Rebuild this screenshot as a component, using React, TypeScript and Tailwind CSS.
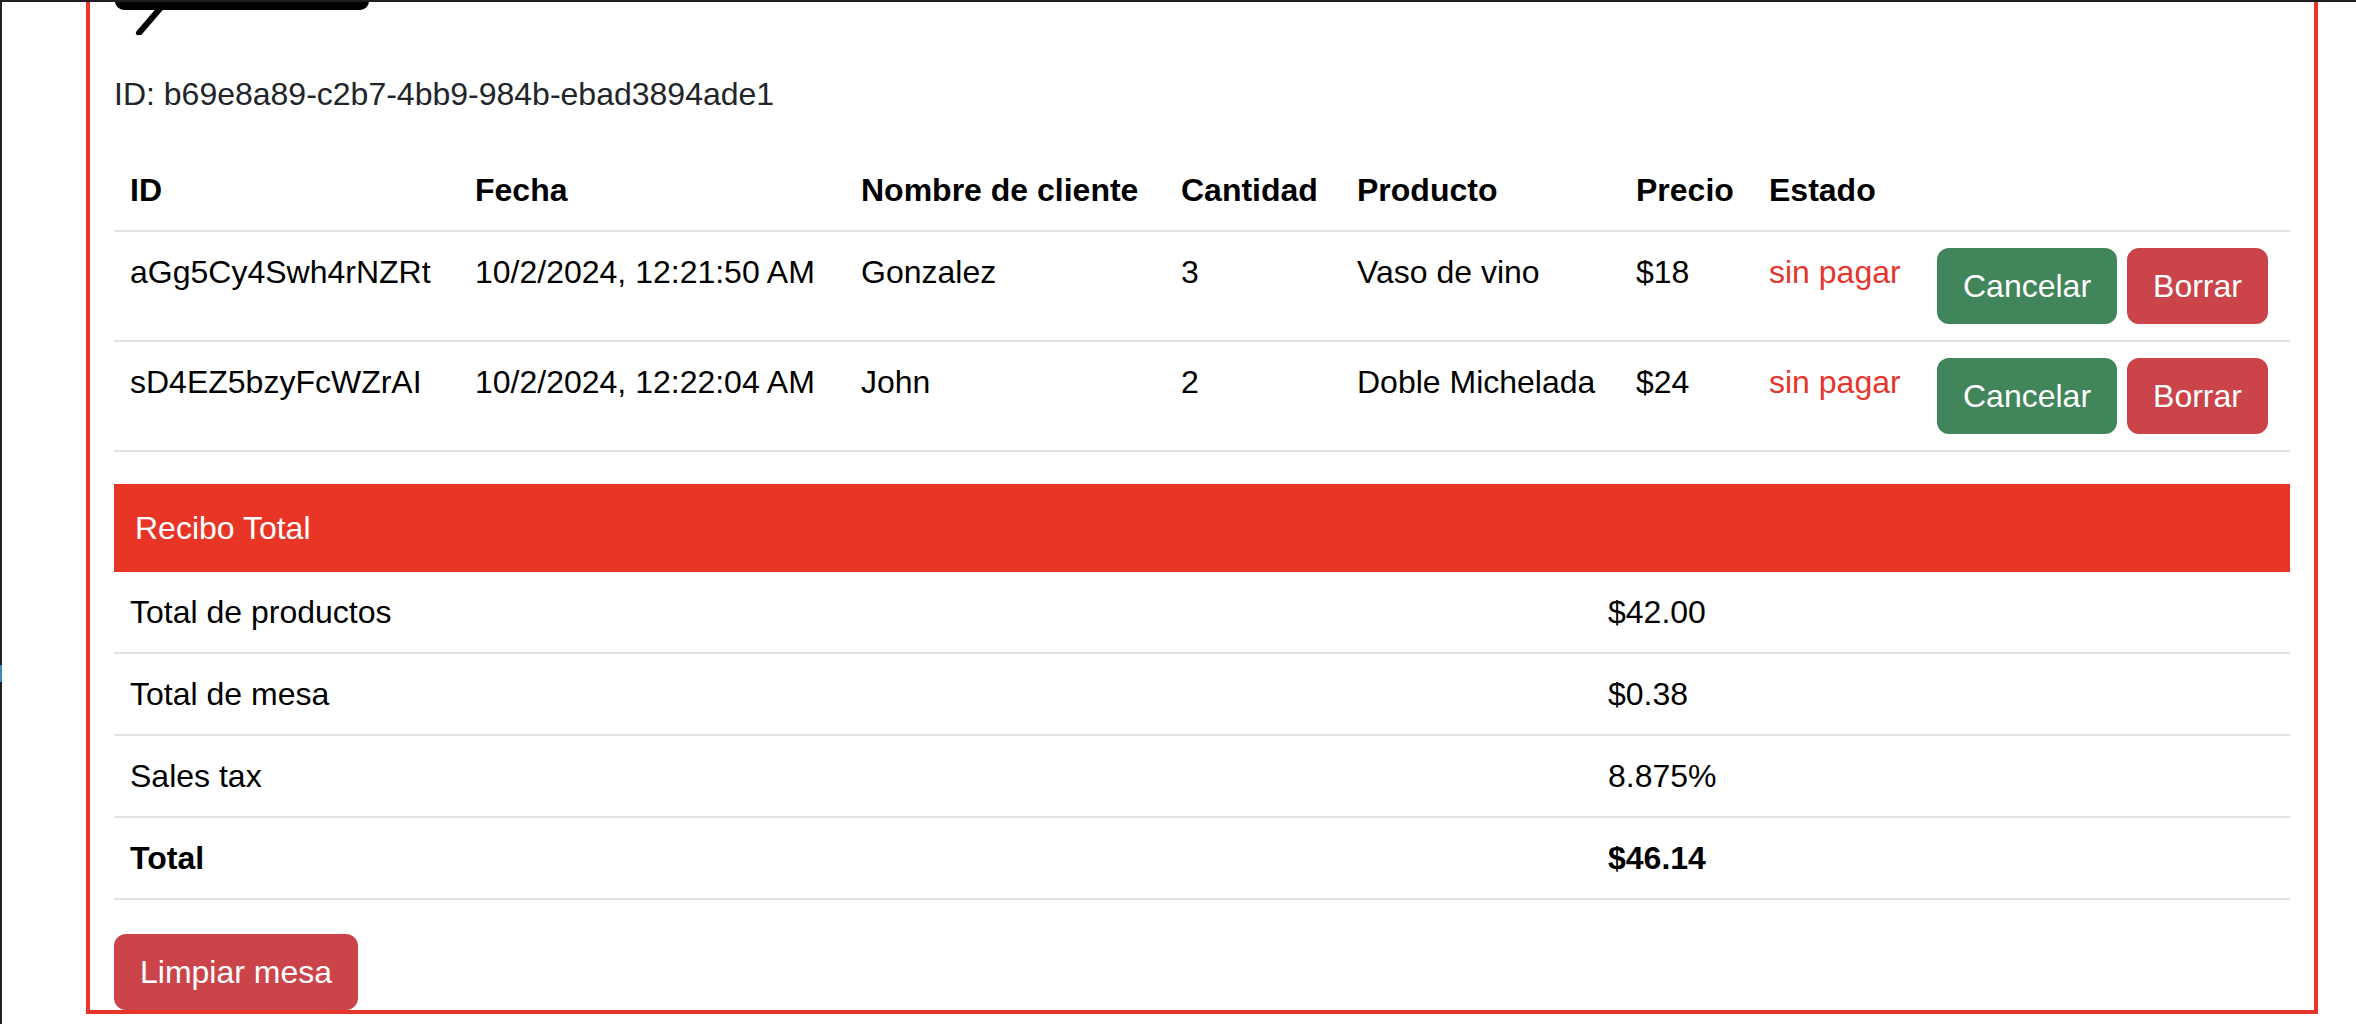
const orders = [
  {
    id: "aGg5Cy4Swh4rNZRt",
    fecha: "10/2/2024, 12:21:50 AM",
    cliente: "Gonzalez",
    cantidad: 3,
    producto: "Vaso de vino",
    precio: "$18",
    estado: "sin pagar",
  },
  {
    id: "sD4EZ5bzyFcWZrAI",
    fecha: "10/2/2024, 12:22:04 AM",
    cliente: "John",
    cantidad: 2,
    producto: "Doble Michelada",
    precio: "$24",
    estado: "sin pagar",
  },
]

const totals = [
  { label: "Total de productos", value: "$42.00" },
  { label: "Total de mesa", value: "$0.38" },
  { label: "Sales tax", value: "8.875%" },
  { label: "Total", value: "$46.14", bold: true },
]

const cell = "px-4 py-4 border-b-2 border-[#dee2e6] text-left align-top"

export default function App() {
  return (
    <div className="relative min-h-screen bg-white border-l-2 border-t-2 border-[#1e1f22] font-['Liberation_Sans',Arial,sans-serif] text-[32px] leading-[48px] text-black">
      {/* stray mark on the window edge */}
      <div className="absolute left-[-2px] top-[663px] w-[2px] h-[17px] bg-[#3b8fb5]" />

      <div className="ml-[84px] w-[2232px] border-4 border-t-0 border-[#e8352b] px-6">
        {/* bottom of the cropped logo */}
        <svg width="260" height="33" viewBox="0 0 260 33" className="block">
          <rect x="1" y="-12" width="254" height="20" rx="9" fill="#000" />
          <line x1="49" y1="3" x2="25" y2="31" stroke="#000" strokeWidth="6" strokeLinecap="round" />
        </svg>

        <p className="mt-[35px] mb-8 text-[#212529]">ID: b69e8a89-c2b7-4bb9-984b-ebad3894ade1</p>

        {/* Orders */}
        <table className="w-full table-fixed mb-8">
          <colgroup>
            <col className="w-[345px]" />
            <col className="w-[386px]" />
            <col className="w-[320px]" />
            <col className="w-[176px]" />
            <col className="w-[279px]" />
            <col className="w-[133px]" />
            <col className="w-[168px]" />
            <col className="w-[369px]" />
          </colgroup>
          <thead>
            <tr>
              <th className={`${cell} font-bold`}>ID</th>
              <th className={`${cell} font-bold`}>Fecha</th>
              <th className={`${cell} font-bold whitespace-nowrap`}>Nombre de cliente</th>
              <th className={`${cell} font-bold`}>Cantidad</th>
              <th className={`${cell} font-bold`}>Producto</th>
              <th className={`${cell} font-bold`}>Precio</th>
              <th className={`${cell} font-bold`}>Estado</th>
              <th className={cell}></th>
            </tr>
          </thead>
          <tbody>
            {orders.map((o) => (
              <tr key={o.id}>
                <td className={cell}>{o.id}</td>
                <td className={`${cell} whitespace-nowrap`}>{o.fecha}</td>
                <td className={cell}>{o.cliente}</td>
                <td className={cell}>{o.cantidad}</td>
                <td className={`${cell} whitespace-nowrap`}>{o.producto}</td>
                <td className={cell}>{o.precio}</td>
                <td className={`${cell} text-[#e8352b] whitespace-nowrap`}>{o.estado}</td>
                <td className={cell}>
                  <div className="flex gap-[10px]">
                    <button className="rounded-[12px] border-2 border-[#41855a] bg-[#41855a] px-6 py-3 text-white">
                      Cancelar
                    </button>
                    <button className="rounded-[12px] border-2 border-[#cb444a] bg-[#cb444a] px-6 py-3 text-white">
                      Borrar
                    </button>
                  </div>
                </td>
              </tr>
            ))}
          </tbody>
        </table>

        {/* Receipt */}
        <div className="bg-[#e93526] text-white pl-[21px] py-5">Recibo Total</div>
        <table className="w-full table-fixed">
          <colgroup>
            <col className="w-[1478px]" />
            <col className="w-[698px]" />
          </colgroup>
          <tbody>
            {totals.map((t) => (
              <tr key={t.label} className={t.bold ? "font-bold" : ""}>
                <td className={cell}>{t.label}</td>
                <td className={cell}>{t.value}</td>
              </tr>
            ))}
          </tbody>
        </table>

        <button className="mt-[34px] block rounded-[12px] border-2 border-[#cb444a] bg-[#cb444a] px-6 py-3 text-white">
          Limpiar mesa
        </button>
      </div>
    </div>
  )
}
